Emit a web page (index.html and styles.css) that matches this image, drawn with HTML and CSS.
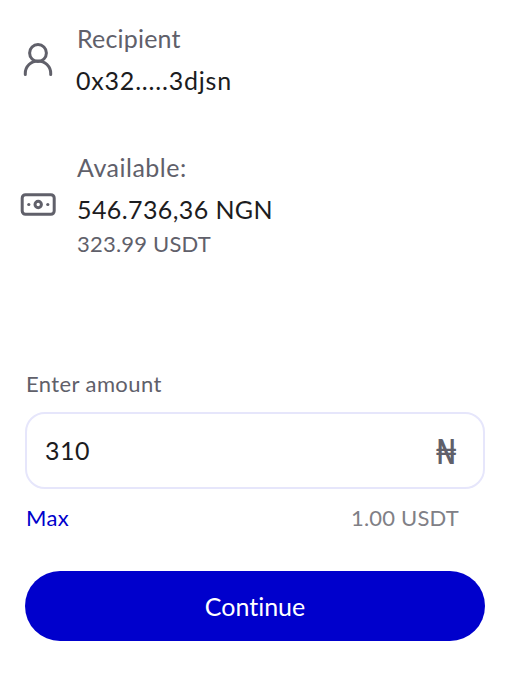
FILE: index.html
```html
<!DOCTYPE html>
<html lang="en">
<head>
    <meta charset="UTF-8">
    <meta name="viewport" content="width=device-width, initial-scale=1.0">
    <title>Send</title>
    <link rel="stylesheet" href="styles.css">
</head>
<body>
    <div class="container">
        <div class="info">
            <svg class="icon user-icon" viewBox="0 0 36 36">
                <circle cx="18" cy="11" r="8.4"/>
                <path d="M5.3 32.5v-1.3a12.7 12.3 0 0 1 25.4 0v1.3"/>
            </svg>
            <div>
                <div class="label"><span class="recipient">Recipient</span></div>
                <div class="value"><span class="address">0x32.....3djsn</span></div>
            </div>
        </div>

        <div class="info balance">
            <svg class="icon cash-icon" viewBox="0 0 36 36">
                <rect x="2.2" y="8.7" width="32" height="19.6" rx="3.3"/>
                <circle cx="18.2" cy="18.5" r="3.2"/>
                <circle class="dot" cx="8.8" cy="18.5" r="1.6"/>
                <circle class="dot" cx="27.8" cy="18.5" r="1.6"/>
            </svg>
            <div>
                <div class="label"><span class="available">Available:</span></div>
                <div class="value"><span class="ngn">546.736,36 NGN</span></div>
                <div class="sub"><span class="usdt">323.99 USDT</span></div>
            </div>
        </div>

        <form>
            <label for="amount">Enter amount</label>
            <div class="field">
                <input type="text" id="amount" name="amount" value="310">
                <span class="currency">₦</span>
            </div>
            <div class="hint">
                <a class="max">Max</a>
                <span class="rate">1.00 USDT</span>
            </div>
            <button type="button">Continue</button>
        </form>
    </div>
</body>
</html>
```
FILE: styles.css
```css
body {
    margin: 0;
    background: white;
    color: #1c1c1e;
    font-family: Lato, "Noto Sans", sans-serif;
}
.container {
    padding: 21px 25px 0;
}
.info {
    display: flex;
    margin-left: -5px;
    gap: 21px;
}
.icon {
    width: 36px;
    height: 36px;
    flex: none;
    fill: none;
    stroke: #60606a;
    stroke-width: 3;
    stroke-linecap: round;
}
.icon .dot {
    fill: #60606a;
    stroke: none;
}
.user-icon {
    margin-top: 21px;
}
.cash-icon {
    margin-top: 36px;
}
.label,
.value {
    font-size: 25px;
    line-height: 34px;
    white-space: nowrap;
}
.label {
    color: #60606a;
    margin-bottom: 8px;
}
.balance {
    margin-top: 53px;
}
.sub {
    margin-top: 4px;
    font-size: 22px;
    line-height: 28px;
    color: #60606a;
}
.recipient {
    letter-spacing: 0.2px;
}
.address {
    margin-left: -1px;
    letter-spacing: 0.8px;
}
.available {
    letter-spacing: 0.5px;
}
.ngn {
    letter-spacing: 0.4px;
}
.usdt {
    letter-spacing: 0.2px;
}
form {
    margin-top: 112px;
}
label {
    display: block;
    margin: 0 0 14px 1px;
    font-size: 22px;
    line-height: 28px;
    letter-spacing: 0.4px;
    color: #60606a;
}
.field {
    display: flex;
    align-items: center;
    height: 77px;
    padding: 0 26px 2px 18px;
    border: 2px solid #e6e6fb;
    border-radius: 20px;
    box-sizing: border-box;
}
input {
    flex: 1;
    min-width: 0;
    padding: 0;
    border: none;
    outline: none;
    background: none;
    font: inherit;
    font-size: 25px;
    letter-spacing: 0.5px;
    color: #1c1c1e;
}
.currency {
    font-size: 35px;
    line-height: 36px;
    font-weight: bold;
    color: #60606a;
    transform: scaleX(0.78);
    transform-origin: right;
}
.hint {
    display: flex;
    justify-content: space-between;
    margin-top: 15px;
    padding: 0 26px 0 1px;
    font-size: 22px;
    line-height: 28px;
}
.max {
    letter-spacing: 0.3px;
    color: #0000cc;
}
.rate {
    letter-spacing: 0.2px;
    color: #808086;
}
button {
    display: block;
    width: 100%;
    height: 70px;
    margin-top: 39px;
    border: none;
    border-radius: 35px;
    background: #0000cc;
    color: white;
    font: inherit;
    font-size: 25px;
    font-variant-ligatures: none;
    cursor: pointer;
}
```
